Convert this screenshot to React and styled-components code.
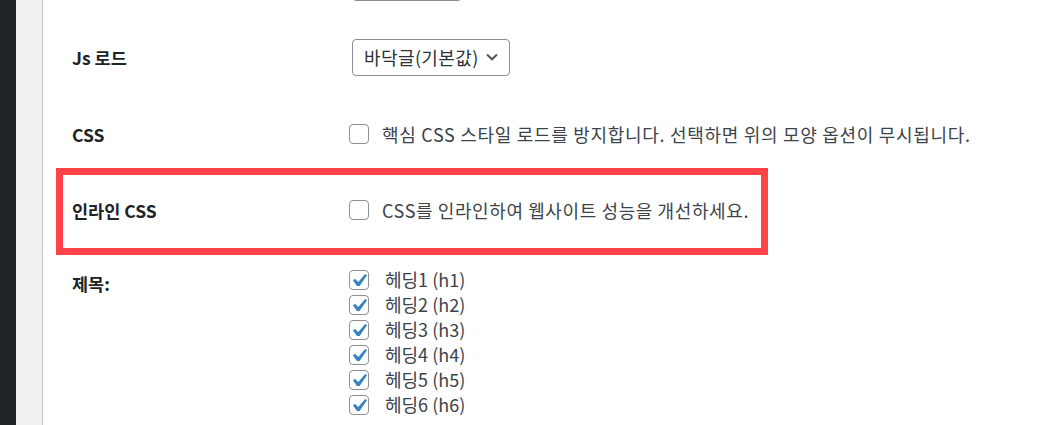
import React from "react";
import styled, { createGlobalStyle } from "styled-components";

const Global = createGlobalStyle`
  html, body { margin: 0; padding: 0; background: #ffffff; }
  body { font-family: "Noto Sans CJK KR", "Noto Sans", sans-serif; }
  * { box-sizing: border-box; }
`;

const Page = styled.div`
  display: flex;
  height: 425px;
  overflow: hidden;
  background: #ffffff;
`;

const AdminBar = styled.div`
  width: 16px;
  flex: none;
  background: #1d2327;
`;

const Gutter = styled.div`
  width: 27px;
  flex: none;
  background: #f0f0f1;
  border-right: 1px solid #c3c4c7;
`;

const Panel = styled.div`
  flex: 1;
  display: flex;
  flex-direction: column;
  padding-left: 29px;
  background: #ffffff;
`;

const SelectStub = styled.div`
  width: 110px;
  height: 37px;
  margin-top: -36px;
  margin-left: 280px;
  border: 1px solid #8c8f94;
  border-radius: 4px;
`;

const Row = styled.div`
  display: grid;
  grid-template-columns: 277px 1fr;
  align-items: ${(p) => (p.$top ? "start" : "center")};
  height: ${(p) => (p.$h ? `${p.$h}px` : "auto")};
  margin-top: ${(p) => p.$mt || 0}px;
`;

const Highlight = styled.div`
  margin-top: 13px;
  margin-left: -16px;
  width: 712px;
  height: 87px;
  border: 7px solid #ff4346;
  padding: 0 0 3px 9px;
  display: flex;
  align-items: center;
`;

const Label = styled.div`
  font-size: 17.5px;
  font-weight: 700;
  color: #1d2327;
  line-height: 23px;
  padding-top: ${(p) => p.$pt || 0}px;
`;

const Select = styled.div`
  margin-left: 3px;
  width: 158px;
  height: 37px;
  border: 1px solid #8c8f94;
  border-radius: 4px;
  display: flex;
  align-items: center;
  justify-content: space-between;
  padding: 0 11px 0 11px;
  font-size: 18px;
  letter-spacing: 0.4px;
  color: #2c3338;
  background: #ffffff;
`;

const Chevron = () => (
  <svg width="12" height="8" viewBox="0 0 12 8" aria-hidden="true">
    <path d="M1 1.5 L6 6.3 L11 1.5" fill="none" stroke="#50575e" strokeWidth="2" />
  </svg>
);

const CheckLine = styled.label`
  display: flex;
  align-items: center;
  gap: ${(p) => p.$gap || 13}px;
  font-size: 18px;
  letter-spacing: ${(p) => p.$ls || 0}px;
  color: #3c434a;
  line-height: 25px;
  height: ${(p) => (p.$h ? `${p.$h}px` : "auto")};
`;

const Box = styled.span`
  width: 20px;
  height: 20px;
  flex: none;
  border: 1px solid #8c8f94;
  border-radius: 4px;
  background: #ffffff;
  display: flex;
  align-items: flex-start;
  justify-content: flex-start;
  padding: 3px 0 0 3px;
`;

const CheckMark = () => (
  <svg width="14" height="12.6" viewBox="5.78 4.89 10.39 9.32" aria-hidden="true">
    <path d="M14.83 4.89l1.34.94-5.81 8.38H9.02L5.78 9.67l1.34-1.25 2.57 2.4z" fill="#3582c4" />
  </svg>
);

const Checkbox = ({ checked }) => <Box>{checked ? <CheckMark /> : null}</Box>;

const List = styled.div`
  display: flex;
  flex-direction: column;
`;

const headings = [1, 2, 3, 4, 5, 6];

export default function App() {
  return (
    <>
      <Global />
      <Page>
        <AdminBar />
        <Gutter />
        <Panel>
          <SelectStub />
          <Row $h={112}>
            <Label>Js 로드</Label>
            <div>
              <Select>
                <span>바닥글(기본값)</span>
                <Chevron />
              </Select>
            </div>
          </Row>
          <Row $h={42}>
            <Label>CSS</Label>
            <CheckLine $ls={0.7}>
              <Checkbox />
              핵심 CSS 스타일 로드를 방지합니다. 선택하면 위의 모양 옵션이 무시됩니다.
            </CheckLine>
          </Row>
          <Highlight>
            <Row>
              <Label>인라인 CSS</Label>
              <CheckLine $ls={0.6}>
                <Checkbox />
                CSS를 인라인하여 웹사이트 성능을 개선하세요.
              </CheckLine>
            </Row>
          </Highlight>
          <Row $top $mt={12}>
            <Label $pt={5}>제목:</Label>
            <List>
              {headings.map((n) => (
                <CheckLine key={n} $gap={16} $h={25}>
                  <Checkbox checked />
                  {`헤딩${n} (h${n})`}
                </CheckLine>
              ))}
            </List>
          </Row>
        </Panel>
      </Page>
    </>
  );
}
